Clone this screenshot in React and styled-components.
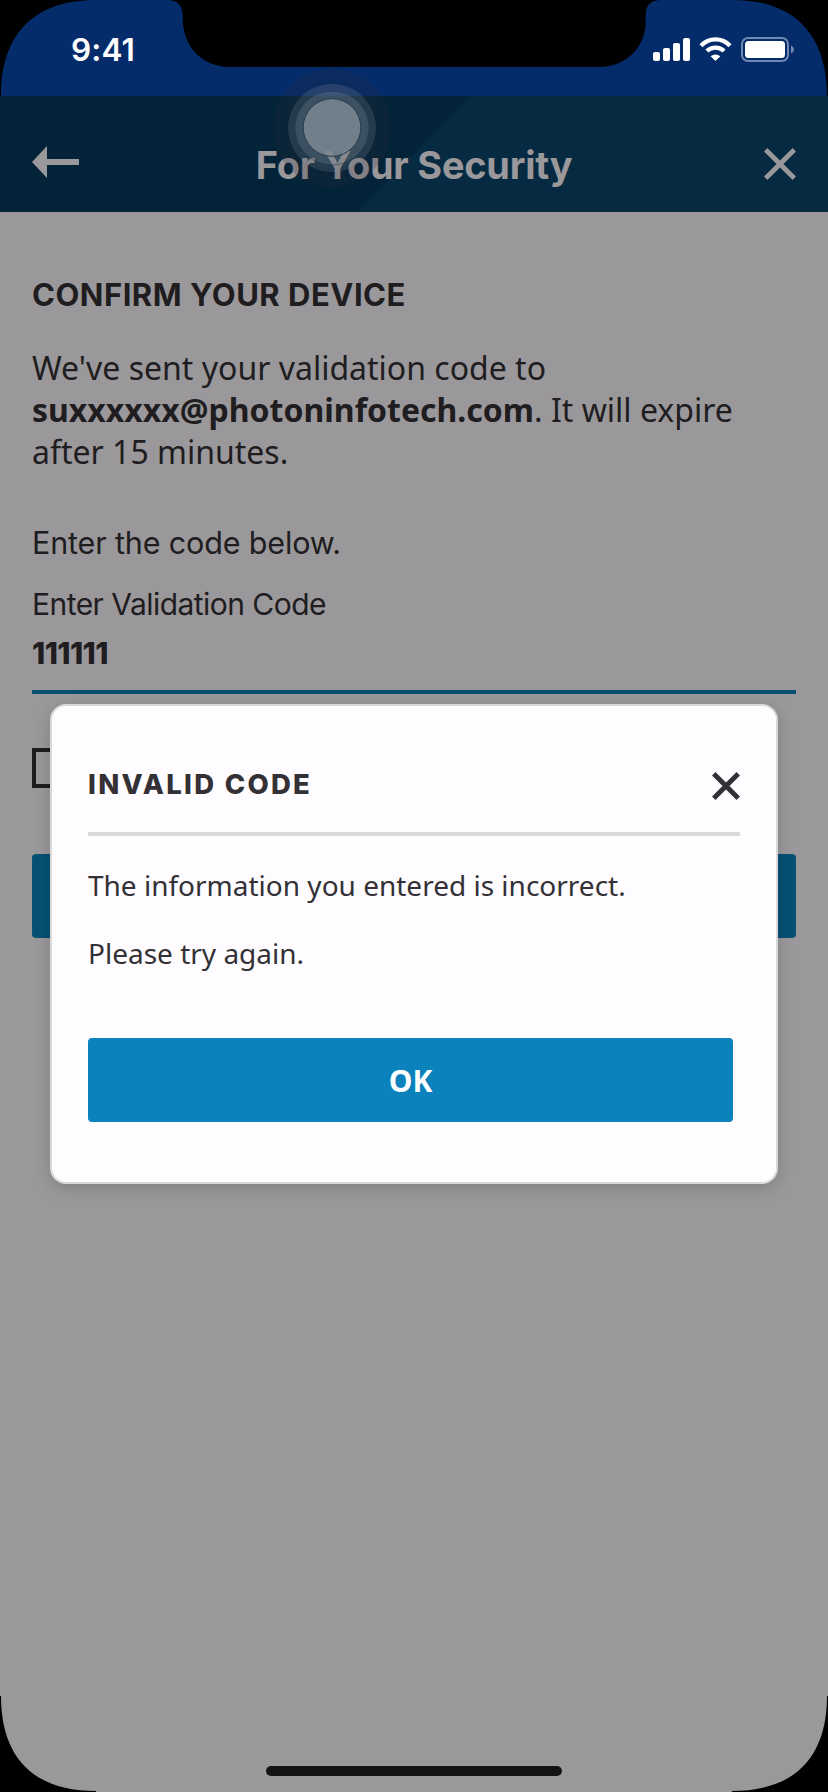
import React from "react";
import styled, { createGlobalStyle } from "styled-components";

const GlobalStyle = createGlobalStyle`
  *, *::before, *::after { box-sizing: border-box; }
  body { margin: 0; background: #000; }
`;

const geometric = `Inter, "Liberation Sans", sans-serif`;
const humanist = `"Noto Sans", "Open Sans", sans-serif`;

const Screen = styled.div`
  position: relative;
  display: flex;
  flex-direction: column;
  width: 828px;
  height: 1792px;
  overflow: hidden;
  background: #9b989b;
  color: #201d21;
`;

const StatusBar = styled.div`
  display: flex;
  justify-content: space-between;
  align-items: flex-start;
  height: 96px;
  padding: 30px 34px 0 71px;
  background: #042c6a;
`;

const Clock = styled.span`
  font: 600 31.5px/39px ${geometric};
  letter-spacing: 0.1px;
  color: #fff;
`;

const StatusIcons = styled.svg`
  display: block;
  width: 142px;
  height: 26px;
  margin-top: 7px;
`;

const Header = styled.header`
  display: grid;
  grid-template-columns: 1fr auto 1fr;
  align-items: start;
  height: 116px;
  padding: 46px 32px 0;
  background: linear-gradient(134.5deg, #032339 0 336px, #052a41 336px);
`;

const HeaderTitle = styled.h1`
  margin: 0;
  font: 700 37.9px/46px ${geometric};
  letter-spacing: -0.22px;
  color: #9b989b;
`;

const Icon = styled.svg`
  display: block;
  flex: none;
  width: ${(p) => p.$w}px;
  height: ${(p) => p.$h}px;
  margin-top: ${(p) => p.$top || 0}px;
  justify-self: ${(p) => p.$align || "start"};
`;

const Content = styled.main`
  display: flex;
  flex-direction: column;
  padding: 63px 32px 0;
`;

const SectionTitle = styled.h2`
  margin: 0;
  font: 700 31px/40px ${geometric};
  letter-spacing: 0.5px;
`;

const Copy = styled.p`
  margin: 32px 0 0;
  font: 400 32px/42px ${humanist};
`;

const Hint = styled.p`
  margin: 50px 0 0;
  font: 400 30.5px/40px ${geometric};
  letter-spacing: -0.15px;
`;

const Field = styled.div`
  display: flex;
  flex-direction: column;
  height: 113px;
  margin-top: 18px;
  border-bottom: 4px solid #055172;
`;

const FieldLabel = styled.label`
  font: 400 30px/46px ${geometric};
  letter-spacing: -0.54px;
`;

const FieldValue = styled.span`
  font: 800 30px/52px ${geometric};
  letter-spacing: -0.6px;
`;

const Checkbox = styled.div`
  width: 40px;
  height: 40px;
  margin-top: 54px;
  border: 4px solid #201d21;
`;

const ContinueButton = styled.div`
  height: 84px;
  margin-top: 66px;
  border-radius: 4px;
  background: #055172;
`;

const Dialog = styled.section`
  position: absolute;
  top: 704px;
  left: 50px;
  display: flex;
  flex-direction: column;
  width: 728px;
  height: 480px;
  padding: 66px 36px 0;
  border: 2px solid #dad9d7;
  border-radius: 16px;
  background: #fefcfe;
  color: #333135;
  box-shadow: 0 4px 16px rgba(0, 0, 0, 0.17);
`;

const DialogHead = styled.div`
  display: flex;
  justify-content: space-between;
  height: 64px;
  border-bottom: 4px solid #dad9d8;
`;

const DialogTitle = styled.h3`
  margin: 0;
  font: 800 27.5px/24px ${geometric};
  letter-spacing: 2.3px;
`;

const DialogText = styled.p`
  margin: ${(p) => p.$gap}px 0 0;
  font: 400 28px/40px ${humanist};
`;

const OkButton = styled.button`
  width: 645px;
  height: 84px;
  margin: 65px 0 0;
  padding: 2px 0 0;
  border: 0;
  border-radius: 4px;
  background: #0b82bb;
  color: #fff;
  font: 700 30px/40px ${humanist};
`;

const Overlay = styled.svg`
  position: absolute;
  top: 0;
  left: 0;
  width: 828px;
  height: 1792px;
  pointer-events: none;
`;

function Cross({ size, width, color, top }) {
  const e = width / 2.8;
  return (
    <Icon $w={size} $h={size} $top={top} $align="end" viewBox={`0 0 ${size} ${size}`}>
      <path
        d={`M${e} ${e}L${size - e} ${size - e}M${size - e} ${e}L${e} ${size - e}`}
        stroke={color}
        strokeWidth={width}
      />
    </Icon>
  );
}

export default function App() {
  return (
    <>
      <GlobalStyle />
      <Screen>
        <StatusBar>
          <Clock>9:41</Clock>
          <StatusIcons viewBox="0 0 142 26">
            <g fill="#fff">
              <rect x="1" y="15" width="7" height="9" rx="2" />
              <rect x="11" y="11" width="7" height="13" rx="2" />
              <rect x="21" y="6" width="7" height="18" rx="2" />
              <rect x="31" y="1" width="7" height="23" rx="2" />
              <path d="M63.5 24 L58.6 19.2 Q63.5 15.6 68.4 19.2 Z" />
            </g>
            <g fill="none" stroke="#fff" strokeWidth="4.3">
              <path d="M49 8.7 A20 20 0 0 1 78 8.7" />
              <path d="M54.9 14 A12.5 12.5 0 0 1 72.1 14" />
            </g>
            <rect x="90" y="1" width="46" height="23" rx="6" fill="none" stroke="#7088b2" strokeWidth="2" />
            <rect x="93" y="4" width="40" height="17" rx="3.5" fill="#fff" />
            <path d="M139 8.5 Q142 10 142 12.5 Q142 15 139 16.5 Z" fill="#7088b2" />
          </StatusIcons>
        </StatusBar>

        <Header>
          <Icon $w={47} $h={32} $top={4} viewBox="0 0 47 32">
            <path d="M0 16 L15 0 V13 H47 V19 H15 V32 Z" fill="#9b989b" />
          </Icon>
          <HeaderTitle>For Your Security</HeaderTitle>
          <Cross size={32} width={4.8} color="#9b989b" top={6} />
        </Header>

        <Content>
          <SectionTitle>CONFIRM YOUR DEVICE</SectionTitle>
          <Copy>
            We've sent your validation code to
            <br />
            <b>suxxxxxx@photoninfotech.com</b>. It will expire
            <br />
            after 15 minutes.
          </Copy>
          <Hint>Enter the code below.</Hint>
          <Field>
            <FieldLabel>Enter Validation Code</FieldLabel>
            <FieldValue>111111</FieldValue>
          </Field>
          <Checkbox />
          <ContinueButton />
        </Content>

        <Dialog>
          <DialogHead>
            <DialogTitle>INVALID CODE</DialogTitle>
            <Cross size={28} width={4.9} color="#333135" />
          </DialogHead>
          <DialogText $gap={29}>The information you entered is incorrect.</DialogText>
          <DialogText $gap={28}>Please try again.</DialogText>
          <OkButton>OK</OkButton>
        </Dialog>

        <Overlay viewBox="0 0 828 1792">
          <circle cx="332" cy="128" r="59" fill="#2a2a36" fillOpacity="0.22" />
          <circle cx="332" cy="128" r="44" fill="#8d9aa4" fillOpacity="0.2" />
          <circle cx="332" cy="128" r="37" fill="#8d9aa4" fillOpacity="0.22" stroke="#1d3148" strokeOpacity="0.5" />
          <circle cx="332" cy="127.5" r="28.8" fill="#7e8b94" fillOpacity="0.8" stroke="#2a3d50" strokeWidth="1" />
          <g fill="#000">
            <path d="M167 0 C177 0 182 5 182.5 14 C183 20 182.5 25 184 30 C188 51 205 66 228 67 H601 C624 66 641 51 645 30 C646 25 645 20 646 12 C646.5 5 651 0 661 0 Z" />
            <path d="M0 0 H96 C34 0 1 34 1 96 H0 Z" />
            <path d="M828 0 H732 C794 0 827 34 827 96 H828 Z" />
            <path d="M0 1792 V1696 H1 C1 1758 34 1791 96 1791 V1792 Z" />
            <path d="M828 1792 V1696 H827 C827 1758 794 1791 732 1791 V1792 Z" />
          </g>
          <rect x="266" y="1766" width="296" height="10" rx="5" fill="#151316" />
        </Overlay>
      </Screen>
    </>
  );
}
